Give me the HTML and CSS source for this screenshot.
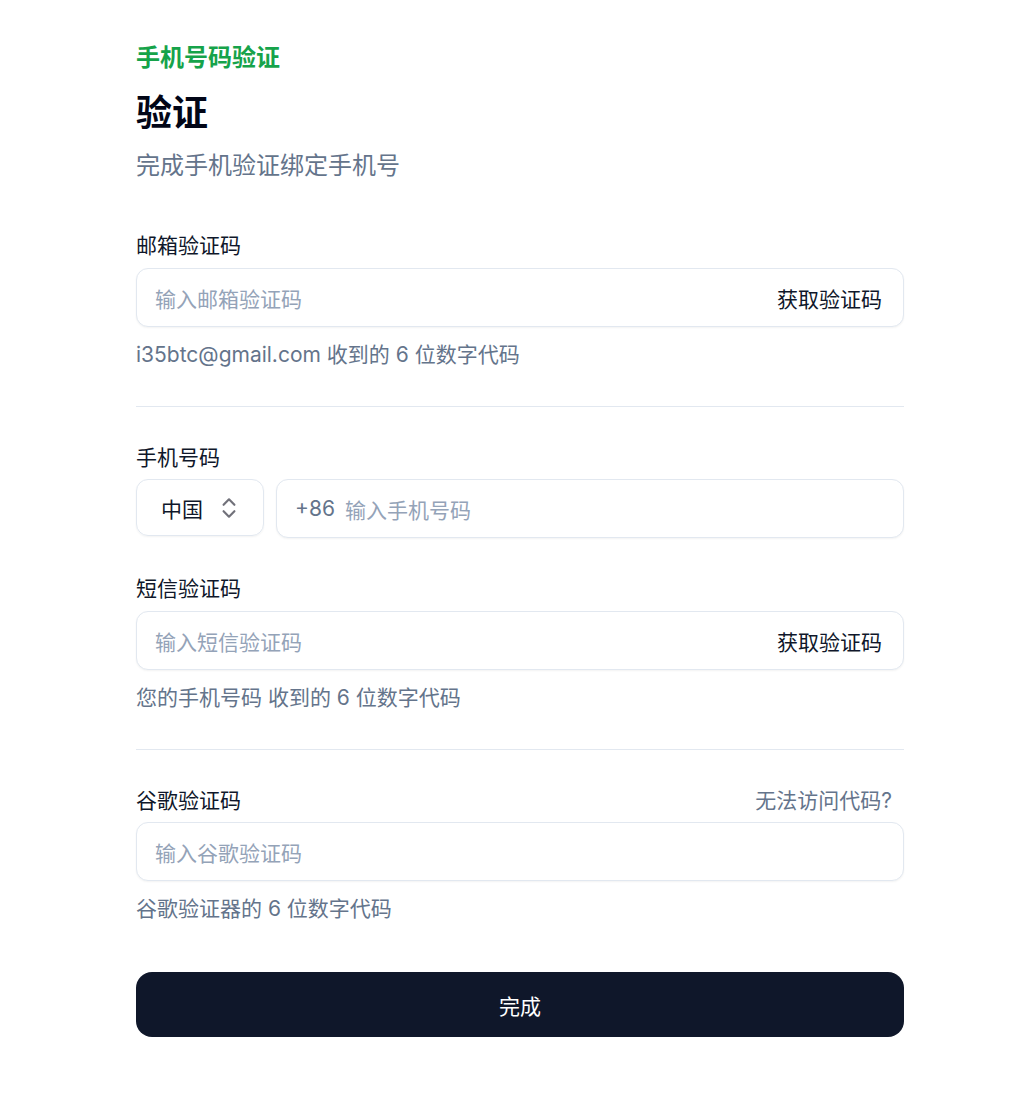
FILE: index.html
```html
<!DOCTYPE html>
<html lang="zh-CN">
<head>
<meta charset="utf-8">
<title>验证</title>
<link rel="stylesheet" href="styles.css">
</head>
<body>
<main class="page">
  <div class="eyebrow">手机号码验证</div>
  <h1 class="title">验证</h1>
  <p class="subtitle">完成手机验证绑定手机号</p>

  <section class="group first">
    <label class="label">邮箱验证码</label>
    <div class="field">
      <span class="placeholder">输入邮箱验证码</span>
      <button class="send">获取验证码</button>
    </div>
    <p class="help">i35btc@gmail.com 收到的 6 位数字代码</p>
  </section>

  <hr class="divider">

  <section class="group">
    <label class="label phone-label">手机号码</label>
    <div class="phone-row">
      <div class="select">
        <span>中国</span>
        <svg class="chev" viewBox="0 0 24 24" width="24" height="24" fill="none" stroke="currentColor" stroke-width="2" stroke-linecap="round" stroke-linejoin="round"><path d="m7 15 5 5 5-5"/><path d="m7 9 5-5 5 5"/></svg>
      </div>
      <div class="field phone">
        <span class="prefix">+86</span>
        <span class="placeholder">输入手机号码</span>
      </div>
    </div>
  </section>

  <section class="group sms">
    <label class="label">短信验证码</label>
    <div class="field">
      <span class="placeholder">输入短信验证码</span>
      <button class="send">获取验证码</button>
    </div>
    <p class="help">您的手机号码 收到的 6 位数字代码</p>
  </section>

  <hr class="divider">

  <section class="group">
    <div class="label-row">
      <label class="label">谷歌验证码</label>
      <a class="link">无法访问代码?</a>
    </div>
    <div class="field">
      <span class="placeholder">输入谷歌验证码</span>
    </div>
    <p class="help">谷歌验证器的 6 位数字代码</p>
  </section>

  <button class="submit">完成</button>
</main>
</body>
</html>
```

FILE: styles.css
```css
* { box-sizing: border-box; }
html, body { margin: 0; padding: 0; background: #ffffff; }
body {
  font-family: "Inter", "Noto Sans CJK SC", sans-serif;
  color: #0f172a;
  font-size: 21px;
}
.page {
  width: 768px;
  margin-left: 136px;
  padding-top: 42px;
  padding-bottom: 40px;
  display: flex;
  flex-direction: column;
}
.eyebrow {
  font-size: 24px;
  line-height: 32px;
  font-weight: 700;
  color: #16a34a;
}
.title {
  margin: 19px 0 0;
  font-size: 36px;
  line-height: 40px;
  font-weight: 700;
  color: #020617;
}
.subtitle {
  margin: 17px 0 0;
  font-size: 24px;
  line-height: 32px;
  color: #64748b;
}
.group {
  display: flex;
  flex-direction: column;
}
.group.first { margin-top: 50px; }
.group.sms { margin-top: 37px; }
.label {
  font-size: 21px;
  line-height: 28px;
  color: #0f172a;
  margin-bottom: 8px;
}
.label.phone-label { margin-bottom: 7px; }
.label-row {
  display: flex;
  justify-content: space-between;
  align-items: center;
  margin-bottom: 7px;
}
.label-row .label { margin-bottom: 0; }
.link {
  font-size: 21px;
  line-height: 28px;
  color: #64748b;
  margin-right: 12px;
  cursor: pointer;
}
.field {
  height: 59px;
  border: 1px solid #e2e8f0;
  border-radius: 12px;
  box-shadow: 0 1px 2px rgba(0, 0, 0, 0.05);
  display: flex;
  align-items: center;
  padding: 0 21px 0 18px;
  background: #fff;
}
.placeholder {
  flex: 1;
  color: #94a3b8;
  font-size: 21px;
}
.send {
  border: 0;
  background: none;
  padding: 0;
  font: inherit;
  font-size: 21px;
  color: #0f172a;
}
.help {
  margin: 14px 0 0;
  font-size: 21px;
  line-height: 28px;
  color: #64748b;
}
.divider {
  border: 0;
  border-top: 1px solid #e2e8f0;
  margin: 37px 0;
  width: 100%;
}
.phone-row {
  display: flex;
  gap: 12px;
  align-items: flex-start;
}
.select {
  width: 128px;
  height: 57px;
  border: 1px solid #e2e8f0;
  border-radius: 12px;
  box-shadow: 0 1px 2px rgba(0, 0, 0, 0.05);
  display: flex;
  align-items: center;
  padding-left: 24px;
  gap: 13px;
  font-size: 21px;
  color: #0f172a;
}
.chev {
  width: 26px;
  height: 26px;
  color: #71717a;
}
.field.phone {
  flex: 1;
  height: 59px;
}
.prefix {
  color: #64748b;
  margin-right: 10px;
  font-size: 21px;
}
.submit {
  margin-top: 49px;
  height: 65px;
  width: 100%;
  border: 0;
  border-radius: 16px;
  background: #0f172a;
  color: #ffffff;
  font-family: "Inter", "Noto Sans CJK SC", sans-serif;
  font-size: 21px;
}
```
